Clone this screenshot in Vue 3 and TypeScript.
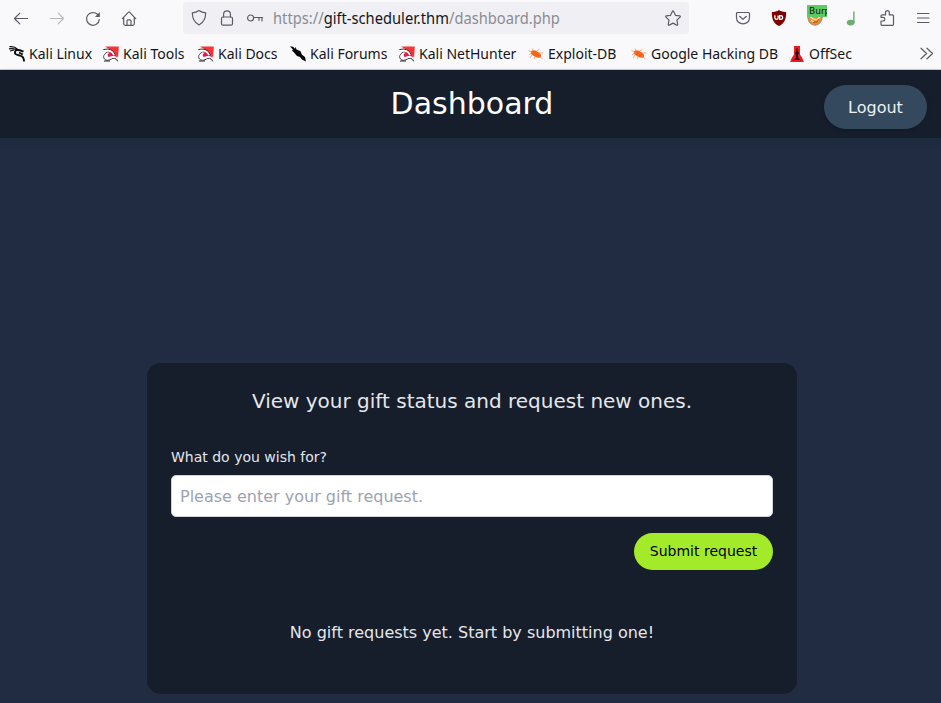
<script setup lang="ts">
import { ref } from 'vue'

type BookmarkIcon = 'dragon' | 'tools' | 'forums' | 'bug' | 'offsec'

interface Bookmark {
  label: string
  icon: BookmarkIcon
}

const bookmarks: Bookmark[] = [
  { label: 'Kali Linux', icon: 'dragon' },
  { label: 'Kali Tools', icon: 'tools' },
  { label: 'Kali Docs', icon: 'tools' },
  { label: 'Kali Forums', icon: 'forums' },
  { label: 'Kali NetHunter', icon: 'tools' },
  { label: 'Exploit-DB', icon: 'bug' },
  { label: 'Google Hacking DB', icon: 'bug' },
  { label: 'OffSec', icon: 'offsec' },
]

const wish = ref('')
</script>

<template>
  <div class="window">
    <div class="browser">
      <div class="toolbar">
        <nav class="nav-buttons">
          <svg class="line" viewBox="0 0 16 16"><path d="M14.500 8.500H1.500M6.800 3.200 1.500 8.500l5.300 5.300" /></svg>
          <svg class="line disabled" viewBox="0 0 16 16"><path d="M1.500 8.500h13M9.200 3.200l5.300 5.300-5.300 5.300" /></svg>
          <svg class="line" viewBox="0 0 16 16"><path d="M14.300 9.600A6.400 6.400 0 1 1 12.400 4.300l1.400 1.400" /><path class="solid" d="M14.800 2v4.900H9.900z" /></svg>
          <svg class="line" viewBox="0 0 16 16"><path d="M1.300 8.600 7.500 2.200q.5-.5 1 0l6.200 6.400M2.700 7.400v6.400q0 1.500 1.500 1.500h7.600q1.500 0 1.500-1.500V7.400M6 15v-4.200q0-1 1-1h2q1 0 1 1V15" /></svg>
        </nav>

        <div class="address">
          <svg class="line" viewBox="0 0 16 16"><path d="M8 .6c2 1.500 4.200 2.100 6.700 2.200 0 6-1.800 9.600-6.700 12.200C3.100 12.400 1.300 8.800 1.300 2.800 3.800 2.700 6 2.100 8 .6z" /></svg>
          <svg class="line" viewBox="0 0 16 16"><rect x="2.500" y="7" width="11" height="8.200" rx="1.500" /><path d="M4.600 7V4.200a3.400 3.400 0 0 1 6.800 0V7" /></svg>
          <svg class="line" viewBox="0 0 16 16"><circle cx="3.600" cy="8" r="3" /><path d="M6.600 7.500h8.900M12 7.500v2.800M15 7.500v3.500" /></svg>
          <span class="url">https://<b>gift-scheduler.thm</b>/dashboard.php</span>
          <svg class="line star" viewBox="0 0 16 16"><path d="M7.400 1.400q.6-1 1.200 0l1.900 3.900 4.200.6q1.100.3.300 1.200l-3.100 3 .8 4.300q0 1.200-1 .7L8 13.100l-3.800 2q-1.100.5-1-.7l.8-4.300-3-3q-.8-.9.300-1.200l4.200-.6z" /></svg>
        </div>

        <div class="extensions">
          <svg class="line" viewBox="0 0 16 16"><path d="M2.500 2.500h11q1 0 1 1V7.400c0 8.700-13 8.700-13 0V3.500q0-1 1-1zM4.600 6.300 8 9.400l3.400-3.100" /></svg>
          <svg viewBox="0 0 16 16"><path fill="#800000" d="M8 0c2 1.500 4.500 2 7.100 2C15.400 9 13.500 13.500 8 16 2.500 13.500.6 9 .9 2 3.500 2 6 1.500 8 0z" /><path fill="none" stroke="#fff" stroke-width="1.300" d="M3.900 5.200v2.500a1.600 1.600 0 0 0 3.200 0V5.500M8.700 5.600h1.500a1.900 1.900 0 0 1 0 3.700H8.700z" /></svg>
          <span class="proxy">
            <svg viewBox="0 0 16 16"><path fill="#f48b29" d="M1 4h14v4c0 9.500-14 9.500-14 0z" /><path fill="none" stroke="#fbe6cb" stroke-width="1.300" d="m3 6.500 3 2.500 4 1 3-3.500M4 10.500l3 1.500" /><path fill="none" stroke="#8a8d93" stroke-width="1" d="M.8 6.500C1 18 15 18 15.200 6.500" /><path fill="none" stroke="#a75114" d="m6 12.500 4-.5 1.500-3" /></svg>
            <span class="badge">Burp</span>
          </span>
          <svg viewBox="0 0 16 16"><ellipse cx="7.700" cy="12.600" rx="3.900" ry="2.800" fill="#6dac70" /><path fill="#6dac70" d="M10.200 1.500h1.400v11.500h-1.400z" /></svg>
          <svg class="line" viewBox="0 0 16 16"><path d="M3 15.300q-1 0-1-1V11h2a1.800 1.800 0 0 0 0-3.600H2V5.900q0-1 1-1h3.500V2.600a1.900 1.900 0 0 1 3.800 0v2.300h3.200q1 0 1 1v8.400q0 1-1 1z" /></svg>
          <svg class="line" viewBox="0 0 16 16"><path d="M2.500 3.500h11.500M2.500 8h11.500M2.500 12.500h11.500" /></svg>
        </div>
      </div>

      <div class="bookmarks">
        <a v-for="b in bookmarks" :key="b.label" class="bookmark">
          <svg v-if="b.icon === 'dragon'" viewBox="0 0 16 16"><path fill="none" stroke="#0c0c0c" stroke-width="1.200" d="M.5.700c4-.6 6 .5 8 2.500M0 2.800c3-.6 5-.2 7 .7M1 5l4-1" /><path fill="none" stroke="#0c0c0c" stroke-width="1.900" d="M6 3.700l5 .6 3.500 1.400M7 4C4 8.500 8 9 11 9.600c3 .5 4 2 4 5.900M10 6.500l3.800 2" /></svg>
          <svg v-else-if="b.icon === 'tools'" viewBox="0 0 16 16"><path fill="#fff" d="M0 2h9l6 13H1z" /><path fill="#fb3433" d="M2 .5h13.800l-.7 11-4-5L6 3z" /><path fill="#e51b4c" d="m5 6.500 5-1 4 4.500.5 4.500-5-4.500-4 1-1-2z" /><path fill="none" stroke="#292229" stroke-width="1" d="M.3 3.700c5-1.500 10-.2 12 5.300M6 5.500c-7 2-6.500 8.700-1.500 8.700 4 0 4.200-2.700 7.200-1.800q2 .6 3 3M1 15h6" /><path fill="none" stroke="#fff" stroke-width="1.700" d="M1 5c5-1 8.500 0 10 4.300M5.500 7C.5 9 2 13.500 6 12.500c2.500-.6 4-2.300 6-1.500q1.800.6 2.400 2.300" /></svg>
          <svg v-else-if="b.icon === 'forums'" viewBox="0 0 16 16"><path fill="#050505" d="m0 .3 3 .5 2 2 .5-2 .8 2.500 4.200 2 1.500 3.500L15 11l1 4.500-4-2-2-2.500-3-1-2.500-3L2 4.500l1-.8z" /></svg>
          <svg v-else-if="b.icon === 'bug'" viewBox="0 0 16 16"><path fill="#f36518" d="M2.800 5.500Q5 3.600 8 4.700l3.500 2.200q2.500 2 1 4.600-4 .7-7-1.800L3 8z" /><path fill="none" stroke="#f58c53" stroke-width=".7" d="m.5 4.500 4 1.800L1 9M5 5 4 2.500M8.500 5l3-1.800M11 7l4.500 0M4 9l-2 3M7 10.500l-.5 2.500M12 11l2.500 2" /></svg>
          <svg v-else viewBox="0 0 16 16"><path fill="#ef1b20" d="M5 0h6v8.500l2.300 3.500 1.500 4H1.200l1.500-4L5 8.500z" /><path fill="#26080b" d="M7.600 2h.8l.3 3 1.300 2-1 2 .2 2.500H6.800L7 9 6 7l1.300-2zM3 14.500q3-.7 4-3h2q1 2.300 4 3L8 13.700z" /></svg>
          <span class="label">{{ b.label }}</span>
        </a>
        <svg class="line overflow" viewBox="0 0 16 16"><path d="m2 2.200 5.500 5.300L2 12.800M8 2.200l5.500 5.300L8 12.800" /></svg>
      </div>
    </div>

    <header class="site-header">
      <h1>Dashboard</h1>
      <button class="logout">Logout</button>
    </header>

    <main>
      <section class="card">
        <h2>View your gift status and request new ones.</h2>
        <form @submit.prevent>
          <label for="wish">What do you wish for?</label>
          <input id="wish" v-model="wish" type="text" placeholder="Please enter your gift request." />
          <button class="submit">Submit request</button>
        </form>
        <p>No gift requests yet. Start by submitting one!</p>
      </section>
    </main>
  </div>
</template>

<style>
body {
  background: #212b42;
}
</style>

<style scoped>
* {
  box-sizing: border-box;
}
.window {
  height: 703px;
  display: flex;
  flex-direction: column;
  overflow: hidden;
  font-family: "DejaVu Sans", sans-serif;
}
.browser {
  flex: none;
  height: 70px;
  background: #f9f9fb;
  border-bottom: 1px solid #cccccf;
  font-family: "Noto Sans", sans-serif;
  color: #15141a;
}
svg {
  display: block;
  flex: none;
  width: 16px;
  height: 16px;
  overflow: visible;
}
.line {
  fill: none;
  stroke: #5b5b66;
  stroke-width: 1.2;
  stroke-linecap: round;
  stroke-linejoin: round;
}
.line .solid {
  fill: #5b5b66;
  stroke: none;
}
.disabled {
  opacity: 0.4;
}
.toolbar {
  height: 36px;
  display: flex;
  align-items: center;
}
.nav-buttons {
  display: flex;
  gap: 20px;
  width: 183px;
  padding-left: 13px;
}
.address {
  display: flex;
  align-items: center;
  width: 506px;
  height: 32px;
  padding: 0 8px;
  gap: 12px;
  border-radius: 4px;
  background: #f0f0f4;
}
.url {
  margin-left: -2px;
  white-space: nowrap;
  font-size: 14.7px;
  line-height: 20px;
  transform: scaleY(1.06);
  color: #8b8b92;
}
.url b {
  font-weight: 400;
  color: #15141a;
}
.star {
  margin-left: auto;
}
.extensions {
  display: flex;
  gap: 20px;
  padding-left: 46px;
}
.proxy {
  position: relative;
  width: 16px;
  height: 16px;
}
.badge {
  position: absolute;
  left: 0;
  top: -5px;
  width: 20px;
  height: 12px;
  padding-left: 2px;
  overflow: hidden;
  background: #60c963;
  color: #102010;
  font: 9px/12px "DejaVu Sans", sans-serif;
}
.bookmarks {
  display: grid;
  grid-template-columns: 94px 95px 92px 109px 129px 103px 158px 130px 16px;
  align-items: center;
  height: 33px;
  padding: 3px 0 0 9px;
}
.bookmark {
  display: flex;
  align-items: center;
  gap: 4px;
  white-space: nowrap;
}
.label {
  font-size: 14px;
  line-height: 18px;
  padding-bottom: 1px;
  transform: scaleY(1.07);
}
.site-header {
  position: relative;
  z-index: 1;
  flex: none;
  display: grid;
  grid-template-columns: 1fr auto 1fr;
  align-items: center;
  height: 68px;
  padding: 0 14px 0 17px;
  background: #161d2b;
  box-shadow: 0 4px 6px -1px rgba(26, 47, 56, 0.5), 0 2px 4px -2px rgba(26, 47, 56, 0.5);
}
h1 {
  grid-column: 2;
  margin: 0;
  font-size: 30px;
  line-height: 36px;
  font-weight: 400;
  color: #fff;
}
button {
  border: 0;
  border-radius: 999px;
  font-family: inherit;
}
.logout {
  justify-self: end;
  width: 103px;
  height: 44px;
  margin-top: 6px;
  background: #34495e;
  color: #ecf0f1;
  font-size: 16px;
  box-shadow: 0 2px 4px rgba(0, 0, 0, 0.1);
}
main {
  flex: 1;
  display: flex;
  align-items: flex-end;
  justify-content: center;
  padding: 0 0 9px 3px;
  background: #212b42;
}
.card {
  width: 650px;
  height: 331px;
  padding: 24px;
  border-radius: 14px;
  background: #161d2b;
  color: #e5e7eb;
}
h2 {
  margin: 0;
  text-align: center;
  font-size: 20px;
  line-height: 28px;
  font-weight: 400;
}
form {
  display: flex;
  flex-direction: column;
  margin-top: 32px;
}
label {
  font-size: 14px;
  line-height: 20px;
}
input {
  height: 42px;
  margin-top: 8px;
  padding: 0 8px;
  border: 1px solid #d1d5db;
  border-radius: 5px;
  background: #fff;
  font-family: inherit;
  font-size: 16px;
}
input::placeholder {
  color: #9ca3af;
  opacity: 1;
}
.submit {
  align-self: flex-end;
  width: 139px;
  height: 37px;
  margin-top: 16px;
  padding: 0 0 2px;
  background: #a3eb2a;
  color: #000;
  font-size: 14px;
}
p {
  margin: 51px 0 0;
  text-align: center;
  font-size: 16px;
  line-height: 24px;
}
</style>
